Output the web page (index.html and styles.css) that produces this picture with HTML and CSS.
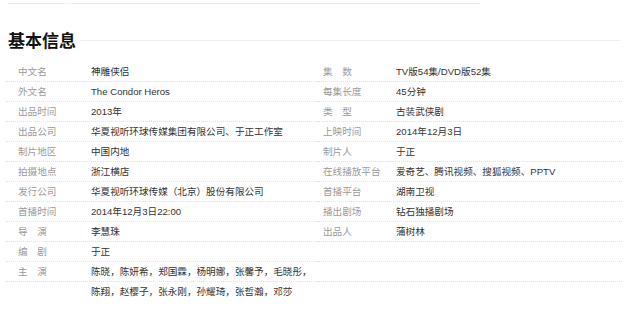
FILE: index.html
```html
<!DOCTYPE html>
<html lang="zh-CN">
<head>
<meta charset="utf-8">
<title>基本信息</title>
<link rel="stylesheet" href="styles.css">
</head>
<body>
<div class="topbar"><span class="tab"></span></div>
<h2 class="title"><span class="title-text">基本信息</span><span class="title-rule"></span></h2>
<div class="info">
  <dl class="col col-left">
    <div class="row"><dt>中文名</dt><dd>神雕侠侣</dd></div>
    <div class="row"><dt>外文名</dt><dd>The Condor Heros</dd></div>
    <div class="row"><dt>出品时间</dt><dd>2013年</dd></div>
    <div class="row"><dt>出品公司</dt><dd>华夏视听环球传媒集团有限公司、于正工作室</dd></div>
    <div class="row"><dt>制片地区</dt><dd>中国内地</dd></div>
    <div class="row"><dt>拍摄地点</dt><dd>浙江横店</dd></div>
    <div class="row"><dt>发行公司</dt><dd>华夏视听环球传媒（北京）股份有限公司</dd></div>
    <div class="row"><dt>首播时间</dt><dd>2014年12月3日22:00</dd></div>
    <div class="row"><dt>导　演</dt><dd>李慧珠</dd></div>
    <div class="row"><dt>编　剧</dt><dd>于正</dd></div>
    <div class="row"><dt>主　演</dt><dd>陈晓，陈妍希，郑国霖，杨明娜，张馨予，毛晓彤，</dd></div>
    <div class="row row-last"><dt></dt><dd>陈翔，赵樱子，张永刚，孙耀琦，张哲瀚，邓莎</dd></div>
  </dl>
  <dl class="col col-right">
    <div class="row"><dt>集　数</dt><dd>TV版54集/DVD版52集</dd></div>
    <div class="row"><dt>每集长度</dt><dd>45分钟</dd></div>
    <div class="row"><dt>类　型</dt><dd>古装武侠剧</dd></div>
    <div class="row"><dt>上映时间</dt><dd>2014年12月3日</dd></div>
    <div class="row"><dt>制片人</dt><dd>于正</dd></div>
    <div class="row"><dt>在线播放平台</dt><dd>爱奇艺、腾讯视频、搜狐视频、PPTV</dd></div>
    <div class="row"><dt>首播平台</dt><dd>湖南卫视</dd></div>
    <div class="row"><dt>播出剧场</dt><dd>钻石独播剧场</dd></div>
    <div class="row"><dt>出品人</dt><dd>蒲树林</dd></div>
    <div class="row"><dt></dt><dd></dd></div>
    <div class="row"><dt></dt><dd></dd></div>
  </dl>
</div>
</body>
</html>
```
FILE: styles.css
```css
html, body {
  margin: 0;
  padding: 0;
  background: #fff;
}
body {
  font-family: "Liberation Sans", "Noto Sans CJK SC", sans-serif;
  font-size: 9.6px;
  color: #333;
}
.topbar {
  margin: 3px 0 0 8px;
  width: 472px;
  height: 1px;
  background: #e8e8e8;
  display: flex;
}
.tab {
  margin-left: 56px;
  width: 7px;
  height: 1px;
  background: #f4f4f4;
}
.title {
  margin: 27px 20px 0 8px;
  height: 18px;
  display: flex;
  align-items: center;
  gap: 3px;
  font-size: 17px;
  line-height: 18px;
  font-weight: bold;
  color: #111;
  font-family: "Noto Sans CJK SC", sans-serif;
}
.title-rule {
  flex: 1;
  height: 1px;
  background: #eeeeee;
}
.info {
  margin-top: 13px;
  margin-left: 6px;
  width: 616px;
  display: grid;
  grid-template-columns: 312px 304px;
}
.col {
  margin: 0;
}
.row {
  display: flex;
  height: 19px;
  line-height: 19px;
  border-bottom: 1px dotted #e2e2e2;
}
.row-last {
  border-bottom: none;
}
.col-left .row dt {
  padding-left: 12px;
}
.col-right .row dt {
  padding-left: 5px;
}
dt {
  width: 73px;
  flex: none;
  color: #9a9a9a;
  white-space: nowrap;
}
dd {
  margin: 0;
  white-space: nowrap;
  color: #333;
}
```
